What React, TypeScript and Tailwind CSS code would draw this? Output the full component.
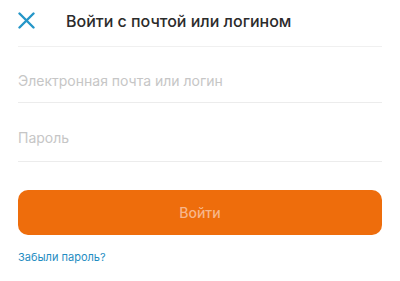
export default function App() {
  return (
    <div className="w-[400px] h-[281px] bg-white overflow-hidden" style={{ fontFamily: 'Inter, "Noto Sans", sans-serif' }}>
      <div className="flex items-center h-[46px] px-[18px]">
        <svg width="17" height="17" viewBox="0 0 17 17" className="shrink-0 mt-[-5px]">
          <path d="M1.5 1.5 L15.5 15.5 M15.5 1.5 L1.5 15.5" stroke="#2596c8" strokeWidth="2.4" strokeLinecap="round" fill="none" />
        </svg>
        <div className="ml-[31px] text-[16px] font-medium text-[#2b2b2b] mt-[-4px]">Войти с почтой или логином</div>
      </div>
      <div className="mx-[18px]">
        <div className="h-px bg-[#f0f0f0]" />
        <div className="h-[56px] flex items-end pb-[11px] border-b border-[#ececec] text-[14px] text-[#c6c6c6]">
          Электронная почта или логин
        </div>
        <div className="h-[59px] flex items-end pb-[13px] border-b border-[#ececec] text-[14px] text-[#c6c6c6]">
          Пароль
        </div>
        <button className="mt-[28px] w-full h-[45px] rounded-[10px] bg-[#ee6d0c] text-[14px] font-medium text-[#f7b68a]">
          Войти
        </button>
        <div className="mt-[14px] text-[11px] text-[#1f8dc2]">Забыли пароль?</div>
      </div>
    </div>
  )
}
